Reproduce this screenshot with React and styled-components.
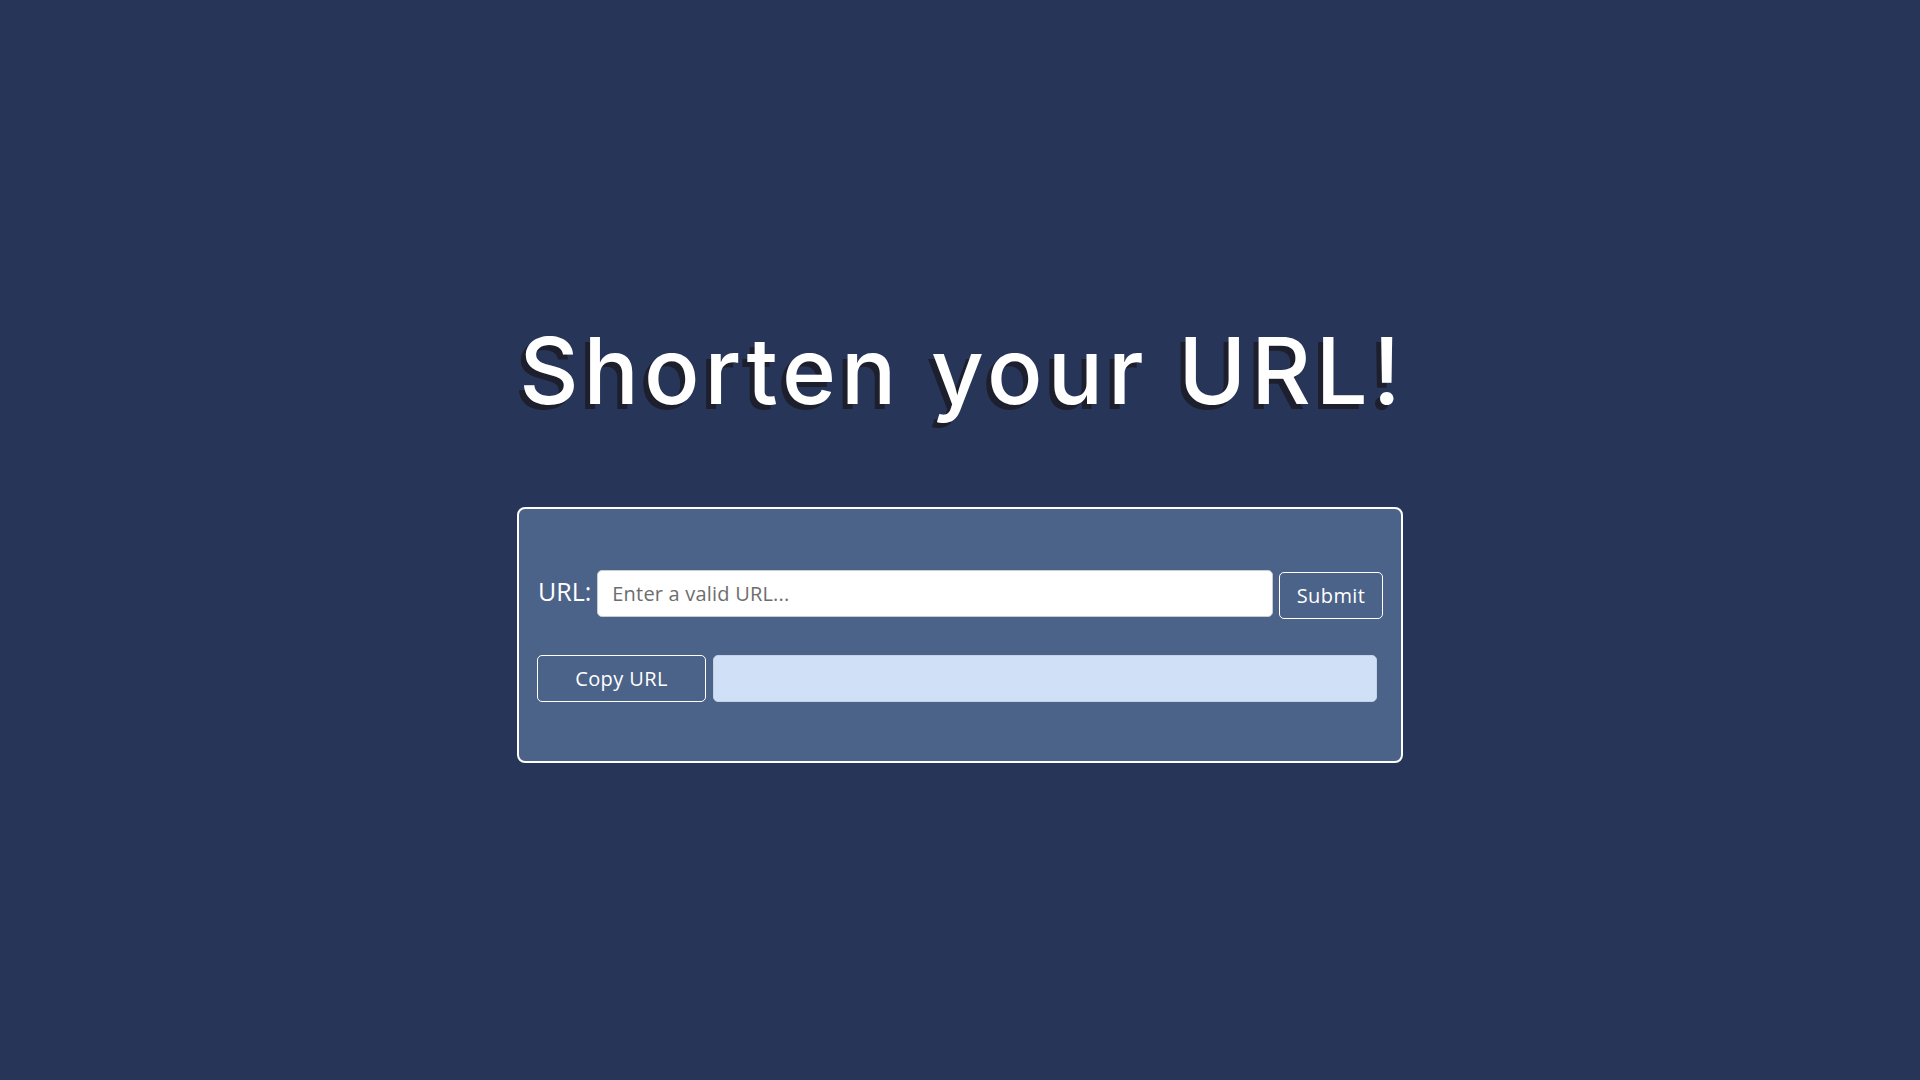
import React from "react";
import styled, { createGlobalStyle } from "styled-components";

const GlobalStyle = createGlobalStyle`
  html, body {
    margin: 0;
    padding: 0;
    background: #263558;
  }
  * { box-sizing: border-box; }
`;

const Page = styled.main`
  min-height: 100vh;
  display: flex;
  flex-direction: column;
  align-items: center;
  justify-content: center;
  gap: 83px;
  font-family: "Open Sans", "Liberation Sans", sans-serif;
`;

const Title = styled.h1`
  margin: 0;
  padding-left: 5px;
  font-family: Inter, "Liberation Sans", sans-serif;
  font-weight: 500;
  font-size: 92px;
  line-height: 107px;
  letter-spacing: 5px;
  color: #ffffff;
  text-shadow: -5px 5px 0 #1d1f2c;
`;

const Card = styled.section`
  width: 886px;
  height: 256px;
  background: #4c6389;
  border: 2px solid #ffffff;
  border-radius: 8px;
  padding: 0 18px;
  display: flex;
  flex-direction: column;
  justify-content: center;
  gap: 36px;
`;

const Row = styled.div`
  display: flex;
  align-items: center;
  gap: ${(p) => p.$gap || 6}px;
`;

const Label = styled.label`
  color: #ffffff;
  font-size: 25px;
  line-height: 1;
  padding-left: 1px;
  margin-top: -4px;
`;

const TextInput = styled.input`
  width: ${(p) => p.$width}px;
  height: 47px;
  border: 1px solid ${(p) => (p.$readOnly ? "#c4d2e6" : "#c9ccd2")};
  border-radius: 5px;
  background: ${(p) => (p.$readOnly ? "#d0e0f7" : "#ffffff")};
  padding: 0 14px;
  font-family: "Open Sans", "Liberation Sans", sans-serif;
  font-size: 20px;
  letter-spacing: 0.2px;
  color: #333;
  outline: none;
  &::placeholder {
    color: #6d6d6d;
  }
`;

const Button = styled.button`
  width: ${(p) => p.$width}px;
  height: 47px;
  margin-top: ${(p) => p.$offset || 0}px;
  background: transparent;
  border: 1px solid #ffffff;
  border-radius: 5px;
  color: #ffffff;
  font-family: "Open Sans", "Liberation Sans", sans-serif;
  font-size: 20px;
  letter-spacing: 0.4px;
  padding: 0;
  cursor: pointer;
`;

export default function App() {
  return (
    <>
      <GlobalStyle />
      <Page>
        <Title>Shorten your URL!</Title>
        <Card>
          <Row $gap={6}>
            <Label htmlFor="url">URL:</Label>
            <TextInput id="url" $width={676} placeholder="Enter a valid URL..." />
            <Button $width={104} $offset={4}>Submit</Button>
          </Row>
          <Row $gap={7}>
            <Button $width={169}>Copy URL</Button>
            <TextInput $width={664} $readOnly readOnly />
          </Row>
        </Card>
      </Page>
    </>
  );
}
